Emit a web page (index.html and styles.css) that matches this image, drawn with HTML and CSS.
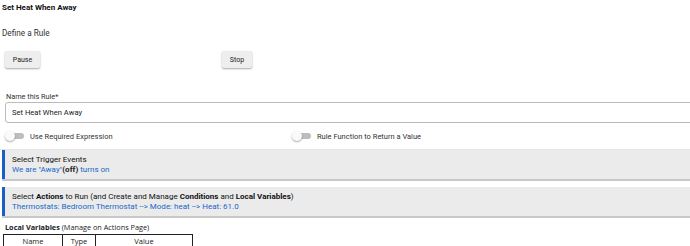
FILE: index.html
```html
<!DOCTYPE html>
<html lang="en">
<head>
    <meta charset="UTF-8">
    <title>Set Heat When Away</title>
    <link rel="stylesheet" href="styles.css">
</head>
<body>

    <h3 class="page-title">Set Heat When Away</h3>
    <div class="subtitle">Define a Rule</div>

    <!-- Pause / Stop -->
    <div class="btn-row">
        <button class="btn btn-pause">Pause</button>
        <button class="btn btn-stop">Stop</button>
    </div>

    <label class="field-label">Name this Rule*</label>
    <div class="text-input">Set Heat When Away</div>

    <!-- Switches -->
    <div class="switch-row">
        <div class="switch-item switch-left">
            <span class="switch"></span>
            <span>Use Required Expression</span>
        </div>
        <div class="switch-item">
            <span class="switch"></span>
            <span>Rule Function to Return a Value</span>
        </div>
    </div>

    <div class="section">
        <div class="section-title">Select Trigger Events</div>
        <div class="section-desc">We are "Away"<b class="dark">(off)</b> turns on</div>
    </div>

    <div class="section">
        <div class="section-title">Select <b>Actions</b> to Run (and Create and Manage <b>Conditions</b> and <b>Local Variables</b>)</div>
        <div class="section-desc">Thermostats: Bedroom Thermostat --&gt; Mode: heat --&gt; Heat: 61.0</div>
    </div>

    <div class="vars-title"><b>Local Variables</b> (Manage on Actions Page)</div>
    <table class="vars">
        <thead>
            <tr>
                <th class="col-name">Name</th>
                <th class="col-type">Type</th>
                <th class="col-value">Value</th>
            </tr>
        </thead>
    </table>

</body>
</html>
```

FILE: styles.css
```css
body {
    font-family: Roboto, "Liberation Sans", sans-serif;
    margin: 0;
    background: #fff;
    color: #222;
    overflow: hidden;
}

.page-title {
    font-size: 8px;
    font-weight: bold;
    margin: 0;
    padding: 3px 0 0 2px;
    line-height: 10px;
    color: #111;
}
.subtitle {
    font-size: 8.2px;
    padding: 14px 0 0 2px;
    line-height: 12px;
    color: #333;
}

/* Buttons */
.btn-row {
    display: flex;
    padding: 12px 0 0 5px;
    height: 20px;
}
.btn {
    font-family: inherit;
    font-size: 7px;
    color: #222;
    background: #eee;
    border: none;
    border-radius: 2px;
    box-shadow: 0 1px 2px rgba(0, 0, 0, 0.35);
    height: 17px;
    padding: 0;
}
.btn-pause {
    width: 35px;
}
.btn-stop {
    width: 30px;
    margin-left: 182px;
}

/* Name field */
.field-label {
    display: block;
    font-size: 7.3px;
    padding: 21px 0 0 6px;
    line-height: 10px;
    color: #333;
}
.text-input {
    margin-left: 5px;
    margin-right: -10px;
    height: 19px;
    border: 1px solid #bbb;
    border-radius: 3px;
    font-size: 7.6px;
    line-height: 19px;
    padding-left: 6px;
    color: #222;
}

/* Switches */
.switch-row {
    display: flex;
    font-size: 7.5px;
    color: #333;
    height: 26px;
    align-items: center;
    border-bottom: 1px solid #e6e6e6;
}
.switch-item {
    display: flex;
    align-items: center;
    gap: 6px;
    padding-left: 5px;
}
.switch-left {
    width: 282px;
}
.switch {
    position: relative;
    width: 16px;
    height: 6px;
    background: #bdbdbd;
    border-radius: 3px;
    margin-left: 3px;
}
.switch::before {
    content: "";
    position: absolute;
    left: -3px;
    top: -2px;
    width: 10px;
    height: 10px;
    border-radius: 50%;
    background: #fafafa;
    box-shadow: 0 1px 2px rgba(0, 0, 0, 0.35);
}

/* Sections */
.section {
    background: #ebebeb;
    border-left: 3px solid #1a5fc6;
    margin: 0 0 0 2px;
    padding: 5px 8px 4px 7px;
    font-size: 8px;
    line-height: 10px;
    box-shadow: 0 2px 0 #c8c8c8;
}
.section + .section {
    margin-top: 8px;
}
.section-title {
    color: #111;
}
.section-desc {
    color: #2067c8;
}
.dark {
    color: #222;
}

/* Local variables table */
.vars-title {
    font-family: "Open Sans", sans-serif;
    font-size: 7.3px;
    margin: 6px 0 0 5px;
    line-height: 11px;
    color: #222;
}
.vars {
    border-collapse: collapse;
    margin-left: 3px;
    margin-top: 1px;
    font-family: "Open Sans", sans-serif;
    font-size: 7.5px;
}
.vars th {
    border: 1px solid #222;
    font-weight: normal;
    padding: 0;
    line-height: 12px;
}
.col-name { width: 58px; }
.col-type { width: 32px; }
.col-value { width: 96px; }
```
